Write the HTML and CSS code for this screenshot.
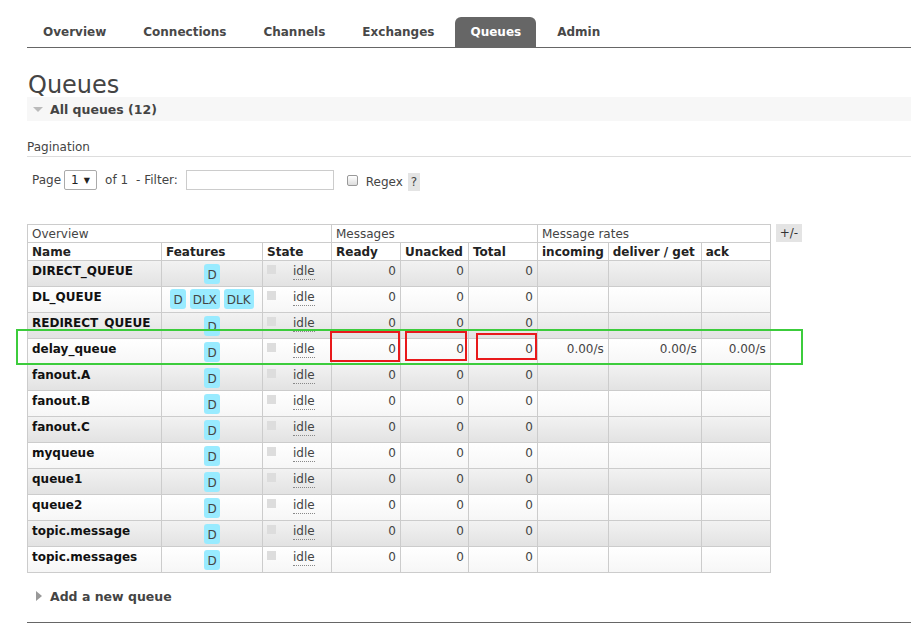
FILE: index.html
```html
<!DOCTYPE html>
<html>
<head>
<meta charset="utf-8">
<link rel="stylesheet" href="styles.css">
</head>
<body>
<div class="page">
  <ul class="tabs">
    <li>Overview</li>
    <li>Connections</li>
    <li>Channels</li>
    <li>Exchanges</li>
    <li class="active">Queues</li>
    <li>Admin</li>
  </ul>

  <h1 class="title">Queues</h1>
  <div class="section-head"><span class="tri-down"></span>All queues (12)</div>

  <div class="pagination-label">Pagination</div>
  <div class="filter-row">
    <span>Page</span>
    <span class="select">1 <span class="arrow">▼</span></span>
    <span class="of">of 1</span>
    <span>- Filter:</span>
    <span class="input"></span>
    <span class="checkbox"></span>
    <span class="regex">Regex</span>
    <span class="help">?</span>
  </div>

  <div class="table-wrap">
    <table class="queues">
      <thead>
        <tr class="group">
          <th colspan="3">Overview</th>
          <th colspan="3">Messages</th>
          <th colspan="3">Message rates</th>
        </tr>
        <tr class="cols">
          <th class="c-name">Name</th>
          <th class="c-feat">Features</th>
          <th class="c-state">State</th>
          <th class="c-ready">Ready</th>
          <th class="c-unack">Unacked</th>
          <th class="c-total">Total</th>
          <th class="c-in">incoming</th>
          <th class="c-del">deliver / get</th>
          <th class="c-ack">ack</th>
        </tr>
      </thead>
      <tbody>
        <tr class="alt"><td class="name">DIRECT_QUEUE</td><td class="feat"><span class="badge">D</span></td><td class="state"><span class="sq"></span><span class="idle">idle</span></td><td class="num">0</td><td class="num">0</td><td class="num">0</td><td></td><td></td><td></td></tr>
        <tr><td class="name">DL_QUEUE</td><td class="feat"><span class="badge">D</span><span class="badge">DLX</span><span class="badge">DLK</span></td><td class="state"><span class="sq"></span><span class="idle">idle</span></td><td class="num">0</td><td class="num">0</td><td class="num">0</td><td></td><td></td><td></td></tr>
        <tr class="alt"><td class="name">REDIRECT_QUEUE</td><td class="feat"><span class="badge">D</span></td><td class="state"><span class="sq"></span><span class="idle">idle</span></td><td class="num">0</td><td class="num">0</td><td class="num">0</td><td></td><td></td><td></td></tr>
        <tr><td class="name">delay_queue</td><td class="feat"><span class="badge">D</span></td><td class="state"><span class="sq"></span><span class="idle">idle</span></td><td class="num">0</td><td class="num">0</td><td class="num">0</td><td class="num">0.00/s</td><td class="num">0.00/s</td><td class="num">0.00/s</td></tr>
        <tr class="alt"><td class="name">fanout.A</td><td class="feat"><span class="badge">D</span></td><td class="state"><span class="sq"></span><span class="idle">idle</span></td><td class="num">0</td><td class="num">0</td><td class="num">0</td><td></td><td></td><td></td></tr>
        <tr><td class="name">fanout.B</td><td class="feat"><span class="badge">D</span></td><td class="state"><span class="sq"></span><span class="idle">idle</span></td><td class="num">0</td><td class="num">0</td><td class="num">0</td><td></td><td></td><td></td></tr>
        <tr class="alt"><td class="name">fanout.C</td><td class="feat"><span class="badge">D</span></td><td class="state"><span class="sq"></span><span class="idle">idle</span></td><td class="num">0</td><td class="num">0</td><td class="num">0</td><td></td><td></td><td></td></tr>
        <tr><td class="name">myqueue</td><td class="feat"><span class="badge">D</span></td><td class="state"><span class="sq"></span><span class="idle">idle</span></td><td class="num">0</td><td class="num">0</td><td class="num">0</td><td></td><td></td><td></td></tr>
        <tr class="alt"><td class="name">queue1</td><td class="feat"><span class="badge">D</span></td><td class="state"><span class="sq"></span><span class="idle">idle</span></td><td class="num">0</td><td class="num">0</td><td class="num">0</td><td></td><td></td><td></td></tr>
        <tr><td class="name">queue2</td><td class="feat"><span class="badge">D</span></td><td class="state"><span class="sq"></span><span class="idle">idle</span></td><td class="num">0</td><td class="num">0</td><td class="num">0</td><td></td><td></td><td></td></tr>
        <tr class="alt"><td class="name">topic.message</td><td class="feat"><span class="badge">D</span></td><td class="state"><span class="sq"></span><span class="idle">idle</span></td><td class="num">0</td><td class="num">0</td><td class="num">0</td><td></td><td></td><td></td></tr>
        <tr><td class="name">topic.messages</td><td class="feat"><span class="badge">D</span></td><td class="state"><span class="sq"></span><span class="idle">idle</span></td><td class="num">0</td><td class="num">0</td><td class="num">0</td><td></td><td></td><td></td></tr>
      </tbody>
    </table>
    <span class="plusminus">+/-</span>

    <div class="mark-green"></div>
    <div class="mark-red r1"></div>
    <div class="mark-red r2"></div>
    <div class="mark-red r3"></div>
  </div>

  <div class="add-queue"><span class="tri-right"></span>Add a new queue</div>
  <div class="bottom-rule"></div>
</div>
</body>
</html>
```

FILE: styles.css
```css
html, body {
  margin: 0;
  padding: 0;
  background: #fff;
}
body {
  font-family: "DejaVu Sans", Verdana, sans-serif;
  font-size: 12px;
  color: #444;
}
.page {
  padding: 17px 0 0 27px;
}
.tabs {
  list-style: none;
  margin: 0;
  padding: 0;
  display: flex;
  gap: 5px;
  border-bottom: 1px solid #666;
  height: 30px;
}
.tabs li {
  padding: 1px 16px 0;
  height: 29px;
  line-height: 29px;
  font-weight: bold;
  font-size: 12px;
  color: #484848;
}
.tabs li.active {
  background: #666;
  color: #fff;
  border-radius: 6px 6px 0 0;
  padding: 1px 15px 0;
}
.title {
  font-size: 24px;
  font-weight: normal;
  color: #444;
  margin: 24px 0 0 1px;
  line-height: 26px;
}
.section-head {
  background: #f7f7f7;
  height: 24px;
  line-height: 24px;
  font-weight: bold;
  font-size: 12.5px;
  color: #444;
  display: flex;
  align-items: center;
  padding-left: 6px;
  margin-top: -1px;
  padding-top: 1px;
  box-sizing: border-box;
}
.tri-down {
  width: 0;
  height: 0;
  border-left: 5px solid transparent;
  border-right: 5px solid transparent;
  border-top: 5px solid #bbb;
  margin-right: 7px;
}
.pagination-label {
  margin-top: 19px;
  padding-bottom: 2px;
  border-bottom: 1px solid #ddd;
  line-height: 14px;
}
.filter-row {
  display: flex;
  align-items: center;
  height: 20px;
  margin-top: 13px;
  padding-left: 5px;
}
.select {
  display: inline-flex;
  align-items: center;
  border: 1px solid #aaa;
  border-radius: 2px;
  margin-left: 3px;
  padding-left: 6px;
  box-sizing: border-box;
  width: 33px;
  height: 20px;
  color: #222;
}
.select .arrow {
  font-size: 8px;
  margin-left: 5px;
}
.of {
  margin-left: 8px;
  margin-right: 8px;
}
.input {
  display: inline-block;
  width: 148px;
  height: 20px;
  border: 1px solid #ccc;
  box-sizing: border-box;
  margin-left: 8px;
}
.checkbox {
  display: inline-block;
  width: 9px;
  height: 9px;
  border: 1px solid #999;
  border-radius: 2px;
  background: linear-gradient(#fff, #ddd);
  margin-left: 13px;
}
.regex {
  margin-left: 8px;
  margin-top: 3px;
}
.help {
  display: inline-block;
  background: #e4e4e4;
  padding: 0 3px;
  height: 18px;
  line-height: 18px;
  margin-left: 5px;
  margin-top: 3px;
}
.table-wrap {
  position: relative;
  display: flex;
  align-items: flex-start;
  margin-top: 34px;
  width: fit-content;
}
.queues {
  border-collapse: collapse;
  font-size: 12px;
  white-space: nowrap;
}
.queues th, .queues td {
  border: 1px solid #ccc;
  padding: 0 4px;
  text-align: left;
  vertical-align: top;
}
.queues tr.group th {
  font-weight: normal;
  height: 16px;
  line-height: 16px;
  padding-top: 1px;
}
.queues tr.cols th {
  font-weight: bold;
  height: 16px;
  line-height: 16px;
  padding-top: 1px;
  color: #222;
}
.c-name { width: 125px; }
.c-feat { width: 92px; }
.c-state { width: 60px; }
.c-ready { width: 60px; }
.c-unack { width: 59px; }
.c-total { width: 60px; }
.c-in { width: 61px; }
.c-del { width: 84px; }
.c-ack { width: 60px; }
.queues tbody tr {
  height: 26px;
  background: linear-gradient(#ffffff, #f6f6f6);
}
.queues tbody tr.alt {
  background: linear-gradient(#f2f2f2, #e2e2e2);
}
.queues td {
  height: 25px;
  line-height: 14px;
  padding-top: 3px;
  box-sizing: border-box;
}
.queues td.name {
  font-weight: bold;
  color: #111;
}
.queues td.feat {
  text-align: center;
  padding-top: 2px;
}
.badge {
  display: inline-block;
  background: #99ebff;
  color: #444;
  border-radius: 3px;
  padding: 0 3px;
  min-width: 9px;
  height: 20px;
  line-height: 22px;
  margin: 0 2px;
  vertical-align: top;
}
.feat .badge:first-child:last-child {
  margin-top: 1px;
}
.state .sq {
  display: inline-block;
  width: 9px;
  height: 9px;
  background: #ddd;
  margin: 1px 17px 0 0;
  vertical-align: top;
}
.idle {
  border-bottom: 1px dotted #888;
  line-height: 15px;
  display: inline-block;
  margin-top: -1px;
}
.queues td.num {
  text-align: right;
  padding-right: 4px;
}
.plusminus {
  background: #e4e4e4;
  padding: 0 4px;
  height: 18px;
  line-height: 18px;
  margin-left: 5px;
  color: #333;
}
.mark-green {
  position: absolute;
  left: -11px;
  top: 105px;
  width: 783px;
  height: 32px;
  border: 2px solid #3ccc3c;
}
.mark-red {
  position: absolute;
  border: 2px solid #e8191b;
}
.mark-red.r1 { left: 303px; top: 107px; width: 66px; height: 27px; }
.mark-red.r2 { left: 378px; top: 107px; width: 58px; height: 26px; }
.mark-red.r3 { left: 449px; top: 109px; width: 57px; height: 23px; }
.add-queue {
  display: flex;
  align-items: center;
  margin-top: 15px;
  padding-left: 9px;
  font-weight: bold;
  font-size: 12.5px;
  color: #444;
  height: 16px;
}
.tri-right {
  width: 0;
  height: 0;
  border-top: 5px solid transparent;
  border-bottom: 5px solid transparent;
  border-left: 6px solid #999;
  margin-right: 8px;
}
.bottom-rule {
  margin-top: 18px;
  border-top: 1px solid #666;
}
```
